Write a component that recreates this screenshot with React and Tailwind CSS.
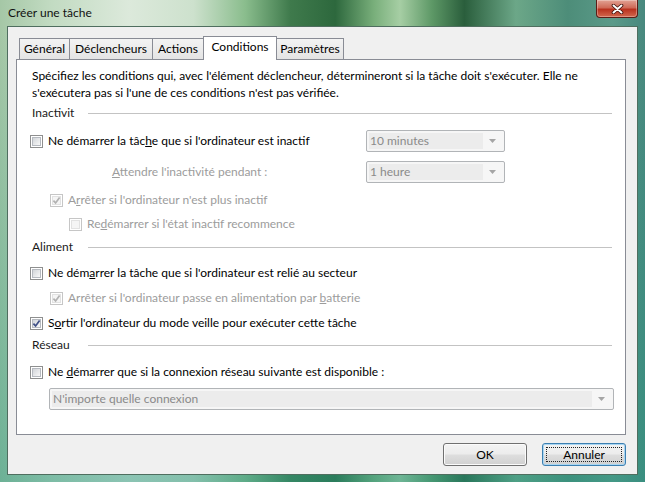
import React from "react";

// Vista-style checkbox: grey frame, shaded well, optional tick
function Check({ checked = false, disabled = false }) {
  return (
    <span
      className={`relative flex h-[13px] w-[13px] shrink-0 items-center justify-center border bg-white ${
        disabled ? "border-[#c6c6c6]" : "border-[#8e8f8f]"
      }`}
    >
      <span
        className={`h-[9px] w-[9px] border ${
          disabled
            ? "border-[#e2e2e2] bg-[#f5f5f5]"
            : "border-[#b6bac0] bg-[linear-gradient(135deg,#d2d5d9,#f8f8f8)]"
        }`}
      />
      {checked && (
        <svg className="absolute left-0 top-0" width="11" height="11" viewBox="0 0 11 11">
          <path
            d="M2.4 5.6 L4.6 7.9 L8.6 2.6"
            fill="none"
            stroke={disabled ? "#b2b2b2" : "#3f4f86"}
            strokeWidth="1.7"
          />
        </svg>
      )}
    </span>
  );
}

function Option({ indent, checked, disabled, children, className = "" }) {
  return (
    <div className={`flex h-[20px] items-center gap-[5px] ${indent} ${className}`}>
      <Check checked={checked} disabled={disabled} />
      <span className={disabled ? "text-[#9c9c9c]" : "text-black"}>{children}</span>
    </div>
  );
}

function Section({ label, className = "" }) {
  return (
    <div className={`flex h-[20px] items-center pl-[15px] pr-[13px] ${className}`}>
      <span className="w-[56px] shrink-0 text-[#1a1a1a]">{label}</span>
      <div className="h-px flex-1 bg-[#c3c3c3]" />
    </div>
  );
}

function Combo({ value, width }) {
  return (
    <div
      className={`flex h-[22px] items-center rounded-[2px] border border-[#b1b4b7] bg-[#f6f6f6] p-[2px] ${width}`}
    >
      <div className="flex h-full flex-1 items-center bg-[#ececec] pl-px text-[#8a8a8a]">{value}</div>
      <div className="flex w-[19px] shrink-0 items-center justify-center">
        <svg width="7" height="4" viewBox="0 0 7 4">
          <path d="M0 0 L7 0 L3.5 4 Z" fill="#a5a5a5" />
        </svg>
      </div>
    </div>
  );
}

function Tab({ label, width, selected = false, className = "" }) {
  if (selected) {
    return (
      <div
        className={`flex h-[24px] items-start justify-center border border-b-0 border-[#898c95] bg-white pt-[2px] ${width} ${className}`}
      >
        {label}
      </div>
    );
  }
  return (
    <div
      className={`mb-px flex h-[21px] items-center justify-center border border-b-0 border-[#898c95] bg-[linear-gradient(to_bottom,#f3f3f3,#e4e4e4)] ${width} ${className}`}
    >
      {label}
    </div>
  );
}

function Button({ children, primary = false }) {
  return (
    <div
      className={`relative flex h-[23px] w-[84px] items-center justify-center rounded-[3px] border bg-[linear-gradient(to_bottom,#f3f3f3_0%,#ececec_48%,#dedede_52%,#d0d0d0_100%)] ${
        primary
          ? "border-[#3c7fb1] shadow-[inset_0_0_0_1px_#a9d6f2]"
          : "border-[#707070] shadow-[inset_0_0_0_1px_#fbfbfb]"
      }`}
    >
      {primary && <span className="absolute inset-[3px] border border-dotted border-[#222]" />}
      <span className="relative">{children}</span>
    </div>
  );
}

export default function App() {
  return (
    <div className="flex h-[482px] w-[645px] flex-col overflow-hidden bg-[linear-gradient(to_bottom,rgba(0,0,0,0)_0px,rgba(0,0,0,0)_26px,rgba(40,150,130,0.45)_100%),linear-gradient(to_right,#a5c7a6_0%,#c2dbc2_8%,#dce9db_20%,#cde1cd_30%,#8abd8d_38%,#3f7a4c_45%,#2d683d_52%,#79af7b_58%,#a6cea4_62%,#5d9866_67%,#2a5e3c_72%,#6ca788_80%,#4d8d79_88%,#5b9a89_95%,#48887e_100%)] px-[7px] pb-[7px] font-['Lato',sans-serif] text-[12px] leading-[16px] text-black">
      {/* caption bar */}
      <div className="flex h-[26px] shrink-0 items-start justify-between">
        <span className="mt-[5px] pl-px text-[#111]">Créer une tâche</span>
        <div className="flex h-[18px] w-[42px] items-center justify-center rounded-b-[4px] border border-t-0 border-[#5b1d16] bg-[linear-gradient(to_bottom,#e2a294_0%,#cf6a58_45%,#b9321f_55%,#d2684e_100%)] shadow-[inset_0_0_0_1px_rgba(255,255,255,0.3)]">
          <svg width="13" height="10" viewBox="0 0 13 10">
            <path d="M2.5 1.5 L10.5 8.5 M10.5 1.5 L2.5 8.5" stroke="#3a0d08" strokeWidth="3.6" strokeLinecap="round" />
            <path d="M2.5 1.5 L10.5 8.5 M10.5 1.5 L2.5 8.5" stroke="#ffffff" strokeWidth="2" strokeLinecap="round" />
          </svg>
        </div>
      </div>

      {/* client area */}
      <div className="flex flex-1 flex-col border border-[#4f6e5f] bg-[#f0f0f0] px-[8px] pt-[9px] pb-[8px]">
        <div className="relative z-10 -mb-px flex h-[24px] items-end pl-[3px]">
          <Tab label="Général" width="w-[51px]" />
          <Tab label="Déclencheurs" width="w-[84px]" className="-ml-px" />
          <Tab label="Actions" width="w-[52px]" className="-ml-px" />
          <Tab label="Conditions" width="w-[74px]" className="-ml-px" selected />
          <Tab label="Paramètres" width="w-[68px]" className="-ml-px" />
        </div>

        <div className="flex h-[376px] w-[610px] flex-col border border-[#898c95] bg-white pt-[7px]">
          <p className="pl-[15px] leading-[17px]">
            Spécifiez les conditions qui, avec l'élément déclencheur, détermineront si la tâche doit s'exécuter. Elle ne
            <br />
            s'exécutera pas si l'une de ces conditions n'est pas vérifiée.
          </p>

          <Section label="Inactivit" className="mt-[2px]" />

          <div className="mt-[7px] flex h-[22px] items-center pl-[13px]">
            <div className="flex w-[336px] items-center gap-[5px]">
              <Check />
              <span>
                Ne démarrer la tâc<span className="underline">h</span>e que si l'ordinateur est inactif
              </span>
            </div>
            <Combo value="10 minutes" width="w-[139px]" />
          </div>

          <div className="mt-[9px] flex h-[22px] items-center pl-[95px]">
            <span className="w-[254px] text-[#9c9c9c]">
              <span className="underline">A</span>ttendre l'inactivité pendant :
            </span>
            <Combo value="1 heure" width="w-[139px]" />
          </div>

          <Option indent="pl-[33px]" checked disabled className="mt-[7px]">
            A<span className="underline">r</span>rêter si l'ordinateur n'est plus inactif
          </Option>
          <Option indent="pl-[52px]" disabled className="mt-[4px]">
            Re<span className="underline">d</span>émarrer si l'état inactif recommence
          </Option>

          <Section label="Aliment" className="mt-[3px]" />

          <Option indent="pl-[13px]" className="mt-[6px]">
            Ne dém<span className="underline">a</span>rrer la tâche que si l'ordinateur est relié au secteur
          </Option>
          <Option indent="pl-[33px]" checked disabled className="mt-[5px]">
            Arrêter si l'ordinateur passe en alimentation par <span className="underline">b</span>atterie
          </Option>
          <Option indent="pl-[13px]" checked className="mt-[5px]">
            S<span className="underline">o</span>rtir l'ordinateur du mode veille pour exécuter cette tâche
          </Option>

          <Section label="Réseau" className="mt-[2px]" />

          <Option indent="pl-[13px]" className="mt-[7px]">
            Ne <span className="underline">d</span>émarrer que si la connexion réseau suivante est disponible :
          </Option>

          <div className="mt-[6px] pl-[32px]">
            <Combo value="N'importe quelle connexion" width="w-[565px]" />
          </div>
        </div>

        <div className="mt-[8px] flex w-[610px] justify-end gap-[15px]">
          <Button>OK</Button>
          <Button primary>Annuler</Button>
        </div>
      </div>
    </div>
  );
}
